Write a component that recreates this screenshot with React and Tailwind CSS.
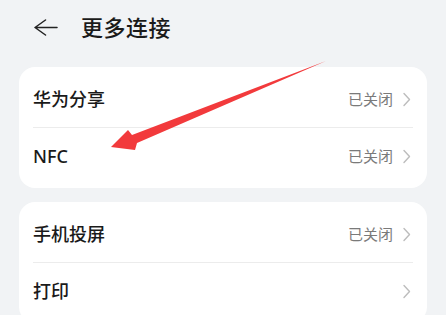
import React from "react";

const rows1 = [
  { label: "华为分享", status: "已关闭" },
  { label: "NFC", status: "已关闭" },
];

const rows2 = [
  { label: "手机投屏", status: "已关闭" },
  { label: "打印", status: "" },
];

function Chevron() {
  return (
    <svg width="8" height="15" viewBox="0 0 8 15" fill="none">
      <path d="M1 1.5 L6.5 7.5 L1 13.5" stroke="#bdbdbd" strokeWidth="1.4" strokeLinecap="round" strokeLinejoin="round" />
    </svg>
  );
}

function Card({ rows }) {
  return (
    <div className="bg-white rounded-[16px] py-1 px-[14px]">
      {rows.map((r, i) => (
        <div key={r.label}>
          {i > 0 && <div className="h-px bg-[#ececec]" />}
          <div className="h-[56px] flex items-center justify-between">
            <span className="text-[18px] font-medium text-[#1a1a1a]">{r.label}</span>
            <div className="flex items-center gap-[10px] pr-[2px]">
              {r.status && <span className="text-[15px] text-[#7a7a7a]">{r.status}</span>}
              <Chevron />
            </div>
          </div>
        </div>
      ))}
    </div>
  );
}

export default function App() {
  return (
    <div
      className="relative w-[446px] h-[315px] overflow-hidden bg-[#f1f3f5]"
      style={{ fontFamily: '"Noto Sans", "Noto Sans CJK SC", sans-serif' }}
    >
      {/* Header */}
      <div className="h-[54px] flex items-center pl-[34px] gap-[23px]">
        <svg width="24" height="17" viewBox="0 0 24 17" fill="none">
          <path d="M23 8.5 H1 M11.5 1 L1 8.5 L11.5 16" stroke="#222" strokeWidth="1.5" strokeLinecap="round" strokeLinejoin="round" />
        </svg>
        <h1 className="text-[22px] font-medium text-[#1a1a1a] tracking-[0.5px]">更多连接</h1>
      </div>

      {/* Cards */}
      <div className="mt-[13px] px-[19px] flex flex-col gap-[14px]">
        <Card rows={rows1} />
        <Card rows={rows2} />
      </div>

      {/* Red annotation arrow */}
      <svg className="absolute top-0 left-0 pointer-events-none" width="446" height="315" viewBox="0 0 446 315">
        <polygon points="111,147 128,130 132,135 326,61 137,143 135,150" fill="#f23a3c" />
      </svg>
    </div>
  );
}
